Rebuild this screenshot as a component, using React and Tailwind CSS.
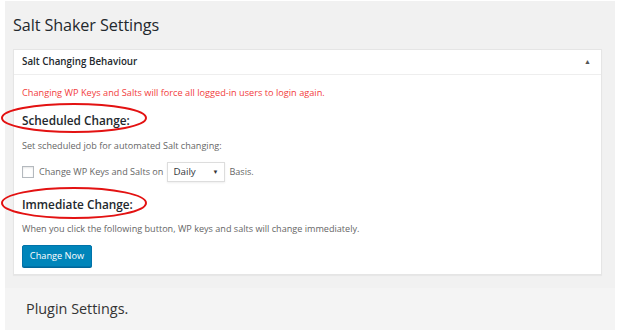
export default function App() {
  return (
    <div className="relative w-[626px] h-[330px] bg-white font-['Open_Sans',sans-serif] text-[#444] overflow-hidden">
      <div className="ml-[5px] mt-[1px] w-[610px] h-[287px] bg-[#f1f1f1] pt-[12px] px-[8px]">
        <h1 className="text-[16.2px] leading-[24px] text-[#23282d] tracking-[-0.1px]">Salt Shaker Settings</h1>
        <div className="mt-[12px] w-[589px] h-[226px] bg-white border border-[#e5e5e5] shadow-[0_1px_1px_rgba(0,0,0,0.04)]">
          <div className="flex items-center justify-between h-[25px] border-b border-[#eee] pl-[8px] pr-[10px]">
            <span className="text-[9.8px] font-semibold text-[#23282d]">Salt Changing Behaviour</span>
            <span className="text-[7px] text-[#555]">▲</span>
          </div>
          <div className="pl-[8px] pt-[12px] text-[9.1px] leading-[12px]">
            <p className="text-[#f23c3c] text-[9.2px]">Changing WP Keys and Salts will force all logged-in users to login again.</p>
            <h2 className="mt-[13px] text-[11.8px] leading-[16px] font-semibold text-[#23282d]">Scheduled Change:</h2>
            <p className="mt-[12px] text-[#666]">Set scheduled job for automated Salt changing:</p>
            <div className="mt-[10px] flex items-center text-[#666]">
              <span className="w-[12px] h-[12px] border border-[#b4b9be] bg-white shadow-[inset_0_1px_2px_rgba(0,0,0,0.1)]"></span>
              <span className="ml-[5px]">Change WP Keys and Salts on</span>
              <span className="ml-[4px] flex items-center justify-between w-[58px] h-[20px] border border-[#ddd] bg-white pl-[5px] pr-[6px] text-[9.8px] text-[#32373c] shadow-[0_1px_2px_rgba(0,0,0,0.07)]">
                Daily
                <span className="text-[6px] text-[#333]">▼</span>
              </span>
              <span className="ml-[4px]">Basis.</span>
            </div>
            <h2 className="mt-[14px] text-[11.8px] leading-[16px] font-semibold text-[#23282d]">Immediate Change:</h2>
            <p className="mt-[11px] text-[#666]">When you click the following button, WP keys and salts will change immediately.</p>
            <button className="mt-[10px] w-[70px] h-[22px] rounded-[2px] bg-[#0085ba] border border-[#0073aa] text-white text-[9.2px] shadow-[0_1px_0_#006799]">Change Now</button>
          </div>
        </div>
      </div>
      <div className="ml-[5px] w-[610px] h-[42px] bg-[#f4f4f4] pl-[21px] pt-[9px]">
        <p className="text-[14.4px] leading-[24px] text-[#333]">Plugin Settings.</p>
      </div>
      <svg className="absolute left-0 top-0 pointer-events-none" width="626" height="330">
        <ellipse cx="74" cy="118" rx="72" ry="14" fill="none" stroke="#e31212" strokeWidth="2" />
        <ellipse cx="74" cy="203" rx="72" ry="15" fill="none" stroke="#e31212" strokeWidth="2" />
      </svg>
    </div>
  );
}
